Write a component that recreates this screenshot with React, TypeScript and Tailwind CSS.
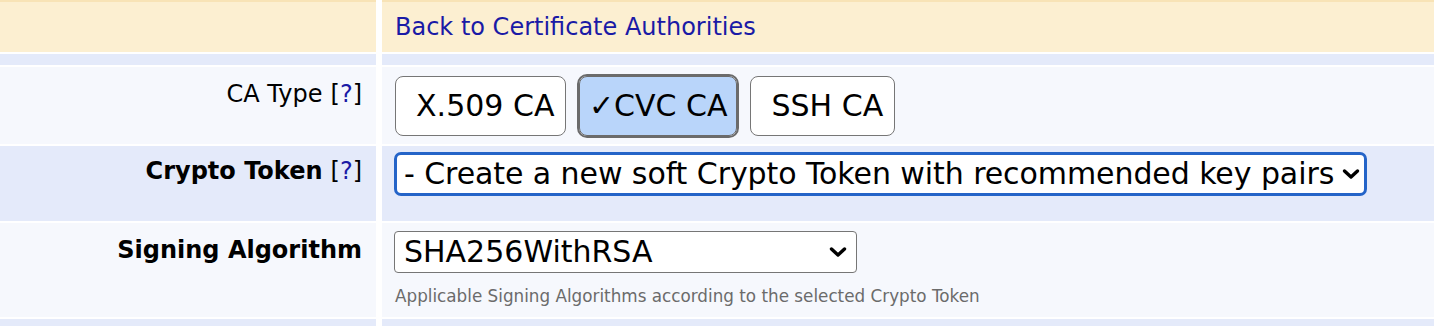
import { ChangeEvent, useState } from 'react';

const labelCell =
  'flex items-start justify-end pr-[14px] text-[24px] leading-[28px] text-black';

function HelpLink() {
  return (
    <span className="ml-[8px] text-[24px] font-normal">
      [<a href="#" className="text-[#1a1aa6]">?</a>]
    </span>
  );
}

function Chevron({ className }: { className: string }) {
  return (
    <svg
      viewBox="0 0 18 11"
      className={`pointer-events-none absolute top-1/2 h-[11px] w-[18px] -translate-y-1/2 ${className}`}
      fill="none"
      stroke="black"
      strokeWidth="3.4"
      strokeLinecap="round"
      strokeLinejoin="round"
    >
      <path d="M2.5 2.5 9 8.5l6.5-6" />
    </svg>
  );
}

const caTypes = ['X.509 CA', 'CVC CA', 'SSH CA'];

export default function App() {
  const [caType, setCaType] = useState('CVC CA');
  const [token, setToken] = useState('new');
  const [algorithm, setAlgorithm] = useState('SHA256WithRSA');

  return (
    <div className="min-h-screen bg-white font-['DejaVu_Sans',Verdana,sans-serif]">
      <div className="grid grid-cols-[376px_1fr] gap-x-[6px] gap-y-[2px]">
        <div className="h-[52px] border-t-2 border-[#f8e3b6] bg-[#fcefd1]" />
        <div className="flex h-[52px] items-center border-t-2 border-[#f8e3b6] bg-[#fcefd1] pl-[13px]">
          <a href="#" className="text-[24px] leading-[28px] text-[#1a1aa6]">
            Back to Certificate Authorities
          </a>
        </div>

        <div className="h-[11px] bg-[#e4eafa]" />
        <div className="h-[11px] bg-[#e4eafa]" />

        <div className={`${labelCell} h-[77px] bg-[#f6f8fd] pt-[13px]`}>
          CA Type
          <HelpLink />
        </div>
        <div className="flex h-[77px] items-start gap-[13px] bg-[#f6f8fd] pl-[13px] pt-[9px]">
          {caTypes.map((type) => {
            const checked = caType === type;
            return (
              <button
                key={type}
                type="button"
                onClick={() => setCaType(type)}
                className={
                  checked
                    ? 'h-[60px] rounded-[8px] border-[1.5px] border-[#6b6b6b] bg-[#b9d5fa] px-[9px] text-[30px] leading-[34px] text-black outline-2 outline-[#6b6b6b]'
                    : 'h-[60px] rounded-[8px] border-[1.5px] border-[#767676] bg-white px-[10.5px] text-[30px] leading-[34px] text-black'
                }
              >
                {checked ? '\u2713' : '\u00a0'}
                {type}
              </button>
            );
          })}
        </div>

        <div className={`${labelCell} h-[75px] bg-[#e4eafa] pt-[11px] font-bold`}>
          Crypto Token
          <HelpLink />
        </div>
        <div className="h-[75px] bg-[#e4eafa] pl-[12px] pt-[6px]">
          <div className="relative w-[973px]">
            <select
              value={token}
              onChange={(e: ChangeEvent<HTMLSelectElement>) => setToken(e.target.value)}
              className="h-[44px] w-full appearance-none rounded-[7px] border-[3px] border-[#2464c8] bg-white pl-[7px] text-[30px] leading-[34px] tracking-[-0.08px] text-black outline-none"
            >
              <option value="new">- Create a new soft Crypto Token with recommended key pairs</option>
            </select>
            <Chevron className="right-[7px]" />
          </div>
        </div>

        <div className={`${labelCell} h-[94px] bg-[#f6f8fd] pt-[13px] font-bold`}>
          Signing Algorithm
        </div>
        <div className="h-[94px] bg-[#f6f8fd] pl-[12px] pt-[8px]">
          <div className="relative w-[463px]">
            <select
              value={algorithm}
              onChange={(e: ChangeEvent<HTMLSelectElement>) => setAlgorithm(e.target.value)}
              className="h-[42px] w-full appearance-none rounded-[4px] border-[1.5px] border-[#767676] bg-white pl-[9px] text-[30px] leading-[34px] text-black outline-none"
            >
              <option>SHA256WithRSA</option>
              <option>SHA256WithRSAAndMGF1</option>
              <option>SHA1WithRSA</option>
            </select>
            <Chevron className="right-[10px]" />
          </div>
          <div className="mt-[13px] pl-[1px] text-[16.8px] leading-[20px] text-[#6b6b6b]">
            Applicable Signing Algorithms according to the selected Crypto Token
          </div>
        </div>

        <div className="h-[11px] bg-[#e4eafa]" />
        <div className="h-[11px] bg-[#e4eafa]" />
      </div>
    </div>
  );
}
